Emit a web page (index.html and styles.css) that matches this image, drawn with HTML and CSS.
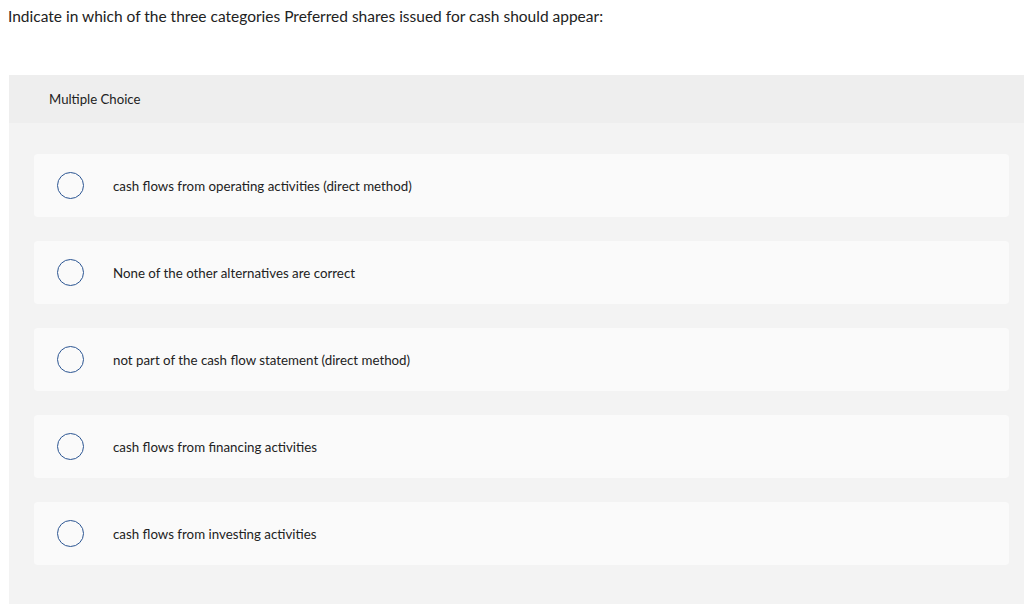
FILE: index.html
```html
<!DOCTYPE html>
<html>
<head>
<meta charset="utf-8">
<link rel="stylesheet" href="styles.css">
</head>
<body>
<p class="question">Indicate in which of the three categories Preferred shares issued for cash should appear:</p>
<div class="panel">
  <div class="panel-head">Multiple Choice</div>
  <div class="panel-body">
    <div class="option"><span class="radio"></span><span class="label">cash flows from operating activities (direct method)</span></div>
    <div class="option"><span class="radio"></span><span class="label">None of the other alternatives are correct</span></div>
    <div class="option"><span class="radio"></span><span class="label">not part of the cash flow statement (direct method)</span></div>
    <div class="option"><span class="radio"></span><span class="label">cash flows from financing activities</span></div>
    <div class="option"><span class="radio"></span><span class="label">cash flows from investing activities</span></div>
  </div>
</div>
</body>
</html>
```

FILE: styles.css
```css
html, body {
  margin: 0;
  padding: 0;
  background: #ffffff;
  overflow: hidden;
}
body {
  font-family: "Lato", "Liberation Sans", sans-serif;
  color: #222222;
}
.question {
  margin: 0;
  padding: 7px 0 0 8px;
  font-size: 15.5px;
  line-height: 18px;
  height: 68px;
}
.panel {
  margin-left: 9px;
  background: #f3f3f3;
  height: 540px;
}
.panel-head {
  background: #eeeeee;
  height: 48px;
  display: flex;
  align-items: center;
  padding-left: 40px;
  font-size: 13.2px;
}
.panel-body {
  display: flex;
  flex-direction: column;
  gap: 24px;
  padding: 31px 15px 0 25px;
}
.option {
  height: 63px;
  background: #fafafa;
  border-radius: 4px;
  display: flex;
  align-items: center;
  padding-left: 23px;
}
.radio {
  width: 25px;
  height: 25px;
  border: 1.5px solid #2b5592;
  border-radius: 50%;
  flex: none;
}
.label {
  margin-left: 29px;
  font-size: 13.3px;
  color: #222222;
}
```
